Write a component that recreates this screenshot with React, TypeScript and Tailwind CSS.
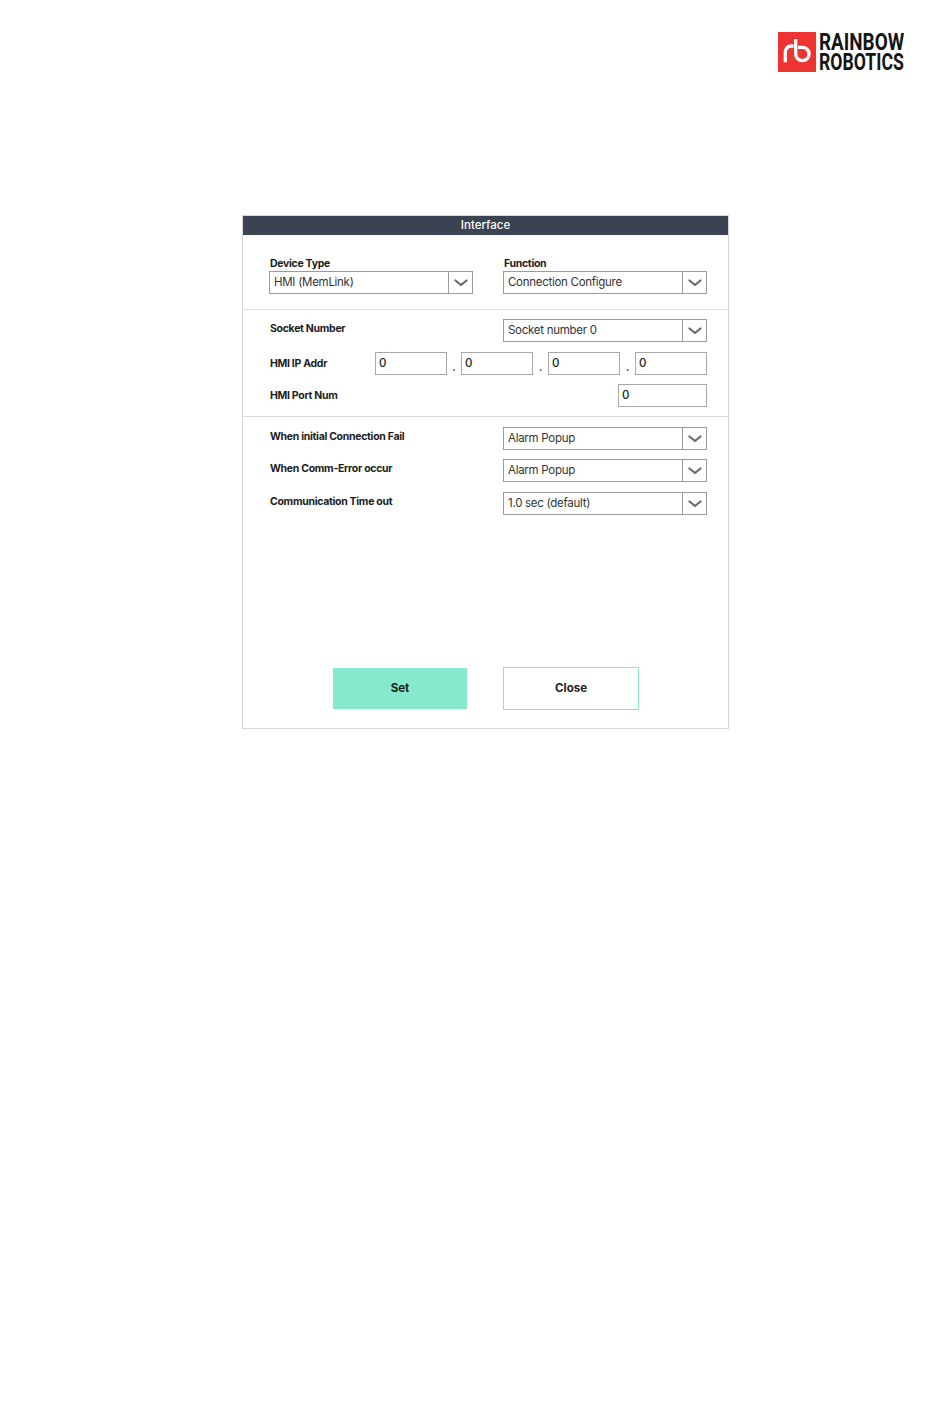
import React from 'react';

const font = { fontFamily: 'Inter, "Open Sans", sans-serif' };

const Chevron: React.FC = () => (
  <svg width="14" height="8" viewBox="0 0 14 8" fill="none">
    <path d="M1.5 1.5 L7 6 L12.5 1.5" stroke="#666b73" strokeWidth="2.2" strokeLinecap="round" strokeLinejoin="round" />
  </svg>
);

const Select: React.FC<{ value: string; className?: string }> = ({ value, className = '' }) => (
  <div className={`w-[204px] h-[23px] flex border border-[#9b9b9b] bg-white ${className}`}>
    <span className="flex-1 pl-[4px] text-[11.5px] tracking-[-0.28px] leading-[21px] text-[#333]">{value}</span>
    <span className="w-[24px] border-l border-[#9b9b9b] flex items-center justify-center">
      <Chevron />
    </span>
  </div>
);

const Input: React.FC<{ width: string }> = ({ width }) => (
  <div className={`${width} h-[23px] border border-[#a8a8a8] pl-[3px] text-[11.5px] leading-[21px] font-medium text-[#222]`}>0</div>
);

const Dot: React.FC<{ width: string }> = ({ width }) => (
  <span className={`${width} text-center text-[11px] leading-[30px] h-[23px] font-bold text-[#444]`}>.</span>
);

const Label: React.FC<{ children: React.ReactNode; className?: string }> = ({ children, className = '' }) => (
  <span className={`ml-[1px] text-[10.5px] tracking-[-0.3px] font-bold text-[#1c1c1c] leading-[14px] ${className}`}>{children}</span>
);

const Logo: React.FC = () => (
  <div className="flex items-center gap-[3px]">
    <svg width="38" height="40" viewBox="0 0 38 40">
      <rect width="38" height="40" fill="#ee3433" />
      <path d="M7.3 30.3 V20 a6 6 0 0 1 6 -6 H15.5" stroke="#fff" strokeWidth="3.3" fill="none" />
      <path d="M17.7 7 V22 a6.7 6.7 0 1 0 6.7 -6.7 H20" stroke="#fff" strokeWidth="3.3" fill="none" />
    </svg>
    <div className="w-[85px] h-[40px] text-[#151515]" style={{ fontFamily: 'Roboto, sans-serif' }}>
      <div className="origin-left scale-x-[0.77] whitespace-nowrap text-[24.5px] leading-[20px] font-bold">RAINBOW</div>
      <div className="origin-left scale-x-[0.72] whitespace-nowrap text-[24.5px] leading-[20px] font-bold">ROBOTICS</div>
    </div>
  </div>
);

export default function App() {
  return (
    <div className="min-h-[1419px] bg-white" style={font}>
      <div className="flex justify-end pt-[32px] pr-[46px]">
        <Logo />
      </div>

      <div className="ml-[242px] mt-[143px] w-[487px] h-[514px] border border-[#d6d6d6] flex flex-col">
        <div className="h-[19px] bg-[#3b4252] text-white text-[11.5px] font-medium text-center leading-[19px]">Interface</div>

        <div className="h-[75px] pl-[26px] pr-[21px] pt-[22px] border-b border-[#dcdcdc] flex justify-between items-start">
          <div className="flex flex-col">
            <Label>Device Type</Label>
            <Select value="HMI (MemLink)" />
          </div>
          <div className="flex flex-col">
            <Label>Function</Label>
            <Select value="Connection Configure" />
          </div>
        </div>

        <div className="h-[107px] pl-[26px] pr-[21px] pt-[9px] border-b border-[#dcdcdc] flex flex-col">
          <div className="flex justify-between items-start">
            <Label className="mt-[3px]">Socket Number</Label>
            <Select value="Socket number 0" />
          </div>
          <div className="flex items-center mt-[10px]">
            <Label className="w-[105px]">HMI IP Addr</Label>
            <Input width="w-[72px]" />
            <Dot width="w-[14px]" />
            <Input width="w-[72px]" />
            <Dot width="w-[15px]" />
            <Input width="w-[72px]" />
            <Dot width="w-[15px]" />
            <Input width="w-[72px]" />
          </div>
          <div className="flex justify-between items-center mt-[9px]">
            <Label className="mt-[1px]">HMI Port Num</Label>
            <Input width="w-[89px]" />
          </div>
        </div>

        <div className="pl-[26px] pr-[21px] pt-[10px] flex flex-col">
          <div className="flex justify-between items-start">
            <Label className="mt-[3px]">When initial Connection Fail</Label>
            <Select value="Alarm Popup" />
          </div>
          <div className="flex justify-between items-start mt-[9px]">
            <Label className="mt-[3px]">When Comm-Error occur</Label>
            <Select value="Alarm Popup" />
          </div>
          <div className="flex justify-between items-start mt-[10px]">
            <Label className="mt-[3px]">Communication Time out</Label>
            <Select value="1.0 sec (default)" />
          </div>
        </div>

        <div className="mt-auto mb-[18px] pl-[90px] flex items-center">
          <button className="w-[134px] h-[41px] pt-[1px] bg-[#86e8cc] text-[11.5px] font-bold text-[#10241d]">Set</button>
          <button className="ml-[36px] w-[136px] h-[43px] pt-[1px] border border-[#86e8cc] bg-white text-[11.5px] font-bold text-[#1c1c1c]">Close</button>
        </div>
      </div>
    </div>
  );
}
